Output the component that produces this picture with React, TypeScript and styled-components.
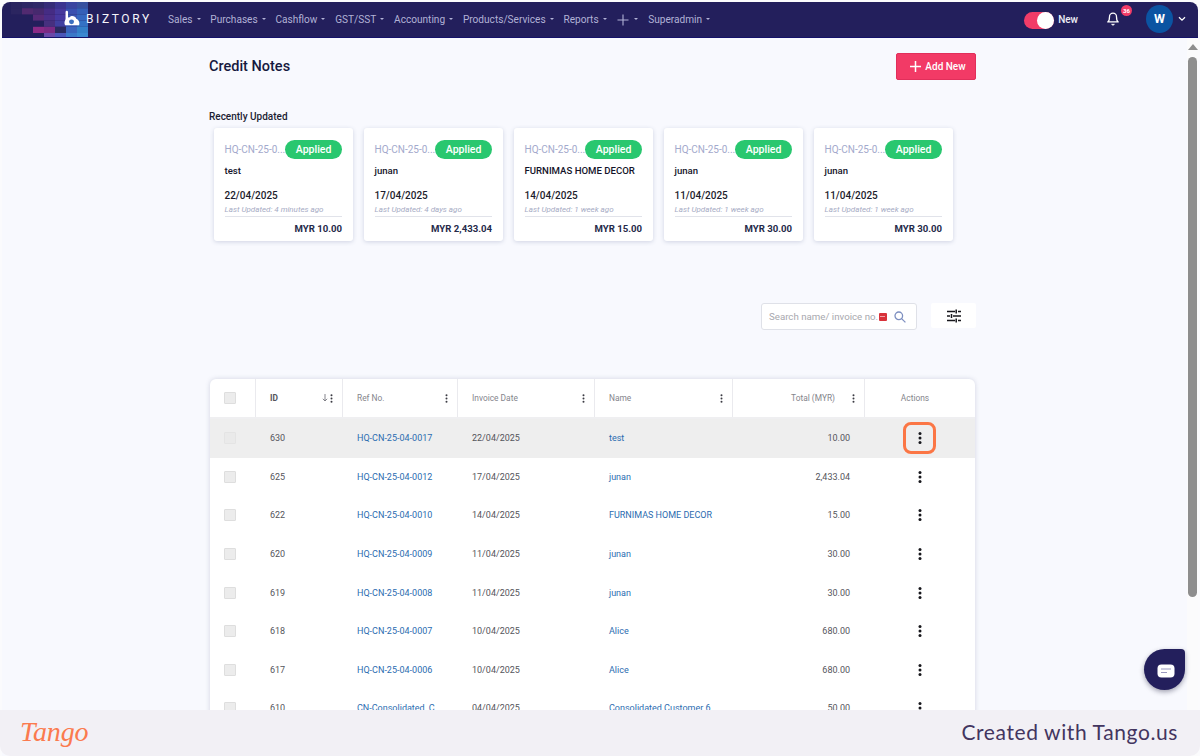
import React from "react";
import styled, { createGlobalStyle } from "styled-components";

const Global = createGlobalStyle`
  html, body { margin: 0; padding: 0; background: #fbfbfc; }
  * { box-sizing: border-box; }
  body { font-family: Roboto, "Liberation Sans", sans-serif; }
`;

const Stage = styled.div`
  position: relative;
  width: 1200px;
  height: 756px;
  overflow: hidden;
  display: flex;
  flex-direction: column;
  padding: 2px 2px 0;
  background: #fbfbfd;
`;
const TopBar = styled.header`
  position: relative;
  flex: none;
  height: 36px;
  display: flex;
  align-items: center;
  padding-bottom: 1px;
  background: #231f5c;
  border-bottom: 1px solid #14126a;
  border-radius: 8px 8px 0 0;
  overflow: hidden;
  color: #fff;
`;
const Mosaic = styled.svg`
  position: absolute;
  left: 0;
  top: 0;
`;
const Brand = styled.div`
  position: relative;
  display: flex;
  align-items: center;
  width: 166px;
  padding-left: 61px;
  gap: 5px;
`;
const BrandName = styled.span`
  font-size: 12px;
  letter-spacing: 2.6px;
  font-weight: 400;
  color: #f4f4fa;
`;
const Menu = styled.nav`
  display: flex;
  align-items: center;
  gap: 9.8px;
`;
const MenuItem = styled.span`
  display: flex;
  align-items: center;
  gap: 4px;
  font-size: 10.1px;
  font-weight: 400;
  color: #b2b2d6;
  white-space: nowrap;
`;
const Caret = styled.i`
  width: 0;
  height: 0;
  border-left: 2.2px solid transparent;
  border-right: 2.2px solid transparent;
  border-top: 2.2px solid #b2b2d6;
`;
const PlusIcon = styled.svg`
  margin: 1px 1px 0 1px;
`;
const TopRight = styled.div`
  margin-left: auto;
  display: flex;
  align-items: center;
  padding-right: 12px;
`;
const Toggle = styled.span`
  position: relative;
  width: 30px;
  height: 17px;
  margin-top: 2px;
  border-radius: 9px;
  background: #f23c68;
`;
const Knob = styled.i`
  position: absolute;
  right: 0;
  top: 0;
  width: 17px;
  height: 17px;
  border-radius: 50%;
  background: #fff;
`;
const ToggleLabel = styled.span`
  font-size: 10px;
  font-weight: 500;
  margin-left: 4px;
  color: #eeeef6;
`;
const BellWrap = styled.span`
  position: relative;
  display: flex;
  margin-left: 28px;
`;
const Badge = styled.b`
  position: absolute;
  left: 15px;
  top: -7px;
  width: 11px;
  height: 11px;
  border-radius: 50%;
  background: #f23c68;
  font-size: 6px;
  line-height: 11px;
  text-align: center;
  font-weight: 700;
`;
const Avatar = styled.span`
  width: 27px;
  height: 28px;
  margin-left: 26px;
  border-radius: 50%;
  background: #0b54a2;
  text-align: center;
  line-height: 27px;
  font-size: 12.5px;
  font-weight: 700;
`;
const Chevron = styled.svg`
  margin-left: 5px;
`;
const Body = styled.div`
  flex: 1;
  min-height: 0;
  display: flex;
  background: #f8f9fe;
`;
const Main = styled.main`
  flex: 1;
  min-width: 0;
  overflow: hidden;
  padding: 15px 0 0 207px;
`;
const Content = styled.div`
  width: 767px;
`;
const TitleRow = styled.div`
  display: flex;
  align-items: center;
  justify-content: space-between;
  height: 27px;
`;
const Title = styled.h1`
  margin: 0;
  font-size: 14.5px;
  line-height: 27px;
  font-weight: 500;
  color: #16193f;
`;
const AddButton = styled.button`
  display: flex;
  align-items: center;
  justify-content: center;
  gap: 4px;
  width: 80px;
  height: 27px;
  padding: 0 0 0 4px;
  border: 1px solid #e12f5b;
  border-radius: 2px;
  background: #f23a66;
  color: #fff;
  font: 500 10px Roboto, sans-serif;
`;
const SectionLabel = styled.div`
  margin-top: 29px;
  font-size: 10px;
  line-height: 16px;
  font-weight: 500;
  color: #1c1e33;
`;
const Cards = styled.div`
  display: flex;
  gap: 11px;
  margin: 3px 0 0 5px;
`;
const Card = styled.article`
  flex: none;
  width: 139px;
  height: 113px;
  padding: 12px 11px 0 10.5px;
  background: #fff;
  border-radius: 3px;
  box-shadow: 0 1px 4px rgba(70, 80, 130, 0.22);
`;
const CardTop = styled.div`
  display: flex;
  align-items: center;
  justify-content: space-between;
  height: 19px;
`;
const CardRef = styled.span`
  font-size: 10px;
  white-space: nowrap;
  color: #a3a9cc;
`;
const Status = styled.span`
  width: 59px;
  height: 19px;
  border-radius: 10px;
  background: #29c76f;
  color: #fff;
  font-size: 10.5px;
  font-weight: 500;
  line-height: 19px;
  text-align: center;
`;
const CardName = styled.div`
  margin-top: 5px;
  height: 14px;
  font-size: 9.6px;
  line-height: 14px;
  font-weight: 500;
  color: #14142a;
  white-space: nowrap;
`;
const CardDate = styled.div`
  margin-top: 11px;
  font-size: 10px;
  line-height: 14px;
  font-weight: 500;
  color: #1c1c2c;
`;
const CardUpdated = styled.div`
  margin-top: 2px;
  padding-bottom: 1px;
  border-bottom: 1px solid #e1e3ea;
  font-size: 8px;
  line-height: 10px;
  font-style: italic;
  color: #a6abc4;
`;
const CardTotal = styled.div`
  margin-top: 5px;
  text-align: right;
  font-size: 9.6px;
  line-height: 14px;
  font-weight: 700;
  color: #252a4a;
`;
const Tools = styled.div`
  display: flex;
  justify-content: flex-end;
  align-items: flex-start;
  gap: 14px;
  margin-top: 62px;
`;
const SearchBox = styled.div`
  display: flex;
  align-items: center;
  width: 156px;
  height: 27px;
  padding: 0 10px 0 7px;
  background: #fff;
  border: 1px solid #dfe1e8;
  border-radius: 3px;
`;
const SearchText = styled.span`
  font-size: 9.7px;
  color: #a8a8ae;
  white-space: nowrap;
`;
const RedChip = styled.i`
  position: relative;
  width: 8px;
  height: 8px;
  margin-left: 0.5px;
  border-radius: 1px;
  background: #d8323a;
  &::after {
    content: "";
    position: absolute;
    left: 1.5px;
    right: 1.5px;
    top: 3.5px;
    height: 1px;
    background: #f2a4a8;
  }
`;
const SearchIcon = styled.svg`
  margin-left: auto;
`;
const FilterButton = styled.button`
  display: flex;
  align-items: center;
  justify-content: center;
  width: 45px;
  height: 25px;
  padding: 0;
  border: 0;
  border-radius: 2px;
  background: #fff;
`;
const TableCard = styled.section`
  margin: 49px 0 0 1px;
  width: 765px;
  background: #fff;
  border-radius: 6px 6px 0 0;
  box-shadow: 0 0 5px rgba(60, 70, 110, 0.2);
`;
const columns = "46px 87px 115px 137px 138px 132px 110px";
const HeadRow = styled.div`
  display: grid;
  grid-template-columns: ${columns};
  height: 40px;
  border-bottom: 2px solid #efeff1;
`;
const HeadCell = styled.div`
  display: flex;
  align-items: center;
  gap: 2px;
  padding: 0 9px 0 14px;
  border-right: 1px solid #eaeaee;
  font-size: 8.4px;
  color: #85858c;
  &:first-child { padding: 0 5px 0 0; justify-content: center; }
  &:last-child { border-right: 0; padding: 0 10px 0 0; justify-content: center; }
`;
const HeadId = styled.span`
  flex: 1;
  font-weight: 700;
  color: #55555c;
`;
const HeadSpacer = styled.span<{ $width?: number }>`
  flex: ${(p) => (p.$width ? `0 0 ${p.$width}px` : "1")};
`;
const Row = styled.div<{ $active?: boolean }>`
  display: grid;
  grid-template-columns: ${columns};
  height: 38.6px;
  align-items: center;
  background: ${(p) => (p.$active ? "#eeeeee" : "#fff")};
`;
const Cell = styled.div<{ $right?: boolean }>`
  padding: ${(p) => (p.$right ? "0 15px 0 0" : "0 0 0 14px")};
  text-align: ${(p) => (p.$right ? "right" : "left")};
  font-size: 9px;
  color: #55555c;
  white-space: nowrap;
  overflow: hidden;
`;
const LinkCell = styled(Cell)`
  color: #2b6cb0;
`;
const CheckCell = styled.div`
  display: flex;
  justify-content: center;
  padding-right: 6px;
`;
const Check = styled.i<{ $faint?: boolean }>`
  width: 12px;
  height: 12px;
  background: ${(p) => (p.$faint ? "#eaeaea" : "#ececec")};
  border: 1px solid ${(p) => (p.$faint ? "#e4e4e4" : "#dedede")};
  border-radius: 1px;
`;
const ActionCell = styled.div`
  position: relative;
  display: flex;
  justify-content: center;
`;
const Highlight = styled.span`
  position: absolute;
  left: 38px;
  top: -10px;
  width: 33px;
  height: 32px;
  border: 3px solid #fb7645;
  border-radius: 8px;
`;
const ScrollBar = styled.aside`
  flex: none;
  width: 11px;
  display: flex;
  flex-direction: column;
  align-items: center;
  padding-top: 6px;
  background: #fbfbfc;
`;
const ScrollThumb = styled.div`
  width: 9px;
  height: 540px;
  margin-top: 7px;
  border-radius: 5px;
  background: #8e8e8e;
`;
const Chat = styled.div`
  position: absolute;
  left: 1144px;
  top: 649px;
  width: 41px;
  height: 41px;
  padding: 2px 0 0 3px;
  display: flex;
  align-items: center;
  justify-content: center;
  background: #231f5c;
  border-radius: 50% 4px 50% 50%;
  box-shadow: 0 2px 5px rgba(30, 30, 60, 0.4);
`;
const Footer = styled.footer`
  position: absolute;
  left: 0;
  right: 0;
  bottom: 0;
  height: 46px;
  display: flex;
  align-items: center;
  justify-content: space-between;
  padding: 0 22px 3px 20px;
  background: #f2f0f5;
  border-radius: 0 0 10px 10px;
`;
const TangoMark = styled.span`
  font-family: "Liberation Serif", serif;
  font-style: italic;
  font-size: 28px;
  line-height: 40px;
  letter-spacing: -0.1px;
  color: #fb7a4e;
`;
const Credit = styled.span`
  font-family: Lato, "Open Sans", sans-serif;
  font-size: 21px;
  letter-spacing: 0.6px;
  color: #43355f;
`;

const menu = ["Sales", "Purchases", "Cashflow", "GST/SST", "Accounting", "Products/Services", "Reports"];
const cards = [
  ["test", "22/04/2025", "4 minutes ago", "MYR 10.00"],
  ["junan", "17/04/2025", "4 days ago", "MYR 2,433.04"],
  ["FURNIMAS HOME DECOR", "14/04/2025", "1 week ago", "MYR 15.00"],
  ["junan", "11/04/2025", "1 week ago", "MYR 30.00"],
  ["junan", "11/04/2025", "1 week ago", "MYR 30.00"],
];
const rows = [
  ["630", "HQ-CN-25-04-0017", "22/04/2025", "test", "10.00"],
  ["625", "HQ-CN-25-04-0012", "17/04/2025", "junan", "2,433.04"],
  ["622", "HQ-CN-25-04-0010", "14/04/2025", "FURNIMAS HOME DECOR", "15.00"],
  ["620", "HQ-CN-25-04-0009", "11/04/2025", "junan", "30.00"],
  ["619", "HQ-CN-25-04-0008", "11/04/2025", "junan", "30.00"],
  ["618", "HQ-CN-25-04-0007", "10/04/2025", "Alice", "680.00"],
  ["617", "HQ-CN-25-04-0006", "10/04/2025", "Alice", "680.00"],
  ["610", "CN-Consolidated_C", "04/04/2025", "Consolidated Customer 6", "50.00"],
];

const mosaic: [number, number, string][] = [
  [1,0,"#29245f"],[2,0,"#2c2664"],[3,0,"#2f2868"],[4,0,"#362c78"],[5,0,"#3c3490"],[6,0,"#3a44a0"],[7,0,"#37509f"],
  [1,1,"#2b2560"],[2,1,"#512a70"],[3,1,"#46296e"],[4,1,"#452c84"],[5,1,"#46389c"],[6,1,"#3a50b0"],[7,1,"#3560b8"],
  [3,2,"#572a78"],[4,2,"#4a2e88"],[5,2,"#4638a0"],[6,2,"#3a55b0"],[7,2,"#3568c0"],
  [4,3,"#46307f"],[5,3,"#4040a0"],[6,3,"#3a5cb8"],[7,3,"#3472c4"],
  [3,4,"#8a2a86"],[4,4,"#7a2a84"],[5,4,"#2a2a60"],[6,4,"#3a64bc"],[7,4,"#3480c8"],
  [4,5,"#6a48a8"],[5,5,"#4a55b8"],[6,5,"#3a78c8"],[7,5,"#3a88d0"],
];

const Dots = () => (
  <svg width="3" height="9" viewBox="0 0 3 9" fill="#3c3c44">
    <circle cx="1.5" cy="1.2" r="1" />
    <circle cx="1.5" cy="4.5" r="1" />
    <circle cx="1.5" cy="7.8" r="1" />
  </svg>
);
const BigDots = () => (
  <svg width="4" height="12" viewBox="0 0 4 12" fill="#17171c">
    <circle cx="2" cy="1.6" r="1.5" />
    <circle cx="2" cy="6" r="1.5" />
    <circle cx="2" cy="10.4" r="1.5" />
  </svg>
);

export default function App() {
  return (
    <>
      <Global />
      <Stage>
        <TopBar>
          <Mosaic width="90" height="36" viewBox="0 0 90 36">
            {mosaic.map(([x, y, c]) => (
              <rect key={`${x}-${y}`} x={x * 11 - 2} y={y * 6.2} width="11" height="6.2" fill={c} />
            ))}
          </Mosaic>
          <Brand>
            <svg width="18" height="19" viewBox="0 0 19 19" fill="none">
              <path d="M4 1.5V11" stroke="#fff" strokeWidth="2.6" strokeLinecap="round" />
              <path d="M2.2 15.5C0.5 12 2.5 7.5 7 7c1.6-2 6.2-1.5 7 1.8 2.6.8 4 4.2 3 6.7H2.2Z" fill="#fff" />
              <circle cx="9" cy="12" r="2.6" fill="#3a6fc0" />
            </svg>
            <BrandName>BIZTORY</BrandName>
          </Brand>
          <Menu>
            {menu.map((m) => (
              <MenuItem key={m}>{m}<Caret /></MenuItem>
            ))}
            <MenuItem>
              <PlusIcon width="12" height="12" viewBox="0 0 12 12" stroke="#b2b2d6" strokeWidth="1.1">
                <path d="M6 .5v11M.5 6h11" />
              </PlusIcon>
              <Caret />
            </MenuItem>
            <MenuItem>Superadmin<Caret /></MenuItem>
          </Menu>
          <TopRight>
            <Toggle><Knob /></Toggle>
            <ToggleLabel>New</ToggleLabel>
            <BellWrap>
              <svg width="14" height="14" viewBox="0 0 24 24" fill="none" stroke="#fff" strokeWidth="2.2" strokeLinecap="round" strokeLinejoin="round">
                <path d="M6 8a6 6 0 0 1 12 0c0 7 3 9 3 9H3s3-2 3-9" />
                <path d="M10.3 21a1.9 1.9 0 0 0 3.4 0" />
              </svg>
              <Badge>36</Badge>
            </BellWrap>
            <Avatar>W</Avatar>
            <Chevron width="8" height="6" viewBox="0 0 8 6" fill="none" stroke="#fff" strokeWidth="1.3">
              <path d="M1 1.2 4 4.2 7 1.2" />
            </Chevron>
          </TopRight>
        </TopBar>
        <Body>
          <Main>
            <Content>
              <TitleRow>
                <Title>Credit Notes</Title>
                <AddButton>
                  <svg width="11" height="11" viewBox="0 0 11 11" stroke="#fff" strokeWidth="1.5">
                    <path d="M5.5 0v11M0 5.5h11" />
                  </svg>
                  Add New
                </AddButton>
              </TitleRow>
              <SectionLabel>Recently Updated</SectionLabel>
              <Cards>
                {cards.map((c, i) => (
                  <Card key={i}>
                    <CardTop>
                      <CardRef>HQ-CN-25-0...</CardRef>
                      <Status>Applied</Status>
                    </CardTop>
                    <CardName>{c[0]}</CardName>
                    <CardDate>{c[1]}</CardDate>
                    <CardUpdated>Last Updated: {c[2]}</CardUpdated>
                    <CardTotal>{c[3]}</CardTotal>
                  </Card>
                ))}
              </Cards>
              <Tools>
                <SearchBox>
                  <SearchText>Search name/ invoice no.</SearchText>
                  <RedChip />
                  <SearchIcon width="12" height="12" viewBox="0 0 12 12" fill="none" stroke="#7d8fc0" strokeWidth="1.3">
                    <circle cx="4.8" cy="4.8" r="3.8" />
                    <path d="M7.6 7.6 11.4 11.4" />
                  </SearchIcon>
                </SearchBox>
                <FilterButton>
                  <svg width="14" height="14" viewBox="0 0 14 14" stroke="#17171c" strokeWidth="1.5">
                    <path d="M0 2.5h8M11 2.5h3M0 7h3M6 7h8M0 11.5h8M11 11.5h3" />
                    <path d="M9.2 0.5v4M4.5 5v4M9.2 9.5v4" />
                  </svg>
                </FilterButton>
              </Tools>
              <TableCard>
                <HeadRow>
                  <HeadCell><Check /></HeadCell>
                  <HeadCell>
                    <HeadId>ID</HeadId>
                    <svg width="6" height="8" viewBox="0 0 6 8" fill="none" stroke="#77777f" strokeWidth="0.9">
                      <path d="M3 0v7M.8 4.8 3 7l2.2-2.2" />
                    </svg>
                    <Dots />
                  </HeadCell>
                  <HeadCell>Ref No.<HeadSpacer /><Dots /></HeadCell>
                  <HeadCell>Invoice Date<HeadSpacer /><Dots /></HeadCell>
                  <HeadCell>Name<HeadSpacer /><Dots /></HeadCell>
                  <HeadCell><HeadSpacer />Total (MYR)<HeadSpacer $width={13} /><Dots /></HeadCell>
                  <HeadCell>Actions</HeadCell>
                </HeadRow>
                {rows.map((r, i) => (
                  <Row key={r[0]} $active={i === 0}>
                    <CheckCell><Check $faint={i === 0} /></CheckCell>
                    <Cell>{r[0]}</Cell>
                    <LinkCell>{r[1]}</LinkCell>
                    <Cell>{r[2]}</Cell>
                    <LinkCell>{r[3]}</LinkCell>
                    <Cell $right>{r[4]}</Cell>
                    <ActionCell>
                      <BigDots />
                      {i === 0 && <Highlight />}
                    </ActionCell>
                  </Row>
                ))}
              </TableCard>
            </Content>
          </Main>
          <ScrollBar>
            <svg width="10" height="6" viewBox="0 0 10 6" fill="#8e8e8e"><path d="M5 0 10 6H0Z" /></svg>
            <ScrollThumb />
          </ScrollBar>
        </Body>
        <Chat>
          <svg width="18" height="14" viewBox="0 0 18 14">
            <rect x="0.5" y="0.5" width="17" height="13" rx="4" fill="#fff" />
            <path d="M4 5h10M4 8.5h6" stroke="#9a98c0" strokeWidth="1.2" />
          </svg>
        </Chat>
        <Footer>
          <TangoMark>Tango</TangoMark>
          <Credit>Created with Tango.us</Credit>
        </Footer>
      </Stage>
    </>
  );
}
